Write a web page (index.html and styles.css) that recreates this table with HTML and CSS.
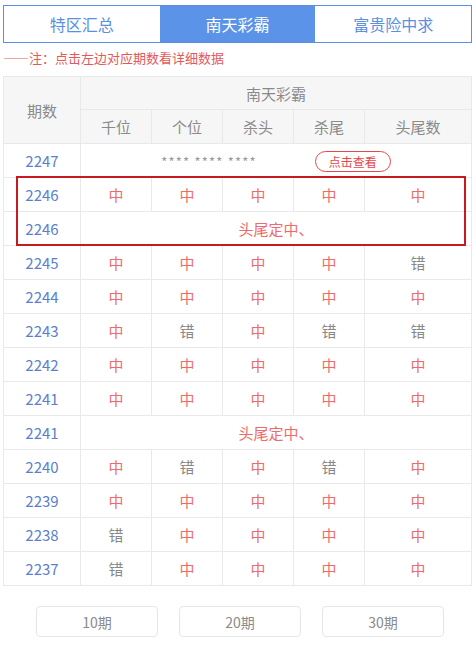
FILE: index.html
```
<!DOCTYPE html>
<html lang="zh-CN">
<head>
<meta charset="utf-8">
<link rel="stylesheet" href="styles.css">
</head>
<body>
<div class="page">
  <div class="tabs">
    <div class="tab">特区汇总</div>
    <div class="tab active">南天彩霸</div>
    <div class="tab">富贵险中求</div>
  </div>
  <div class="note">——注：点击左边对应期数看详细数据</div>
  <div class="table-wrap">
    <table class="grid">
      <colgroup>
        <col class="c-qi"><col class="c-n"><col class="c-n"><col class="c-n"><col class="c-n"><col class="c-last">
      </colgroup>
      <thead>
        <tr><th rowspan="2">期数</th><th colspan="5">南天彩霸</th></tr>
        <tr><th>千位</th><th>个位</th><th>杀头</th><th>杀尾</th><th>头尾数</th></tr>
      </thead>
      <tbody>
        <tr><td class="qi">2247</td><td colspan="5"><span class="stars">**** **** ****</span><span class="view">点击查看</span></td></tr>
        <tr><td class="qi">2246</td><td class="hit">中</td><td class="hit">中</td><td class="hit">中</td><td class="hit">中</td><td class="hit">中</td></tr>
        <tr><td class="qi">2246</td><td colspan="5" class="hit">头尾定中、</td></tr>
        <tr><td class="qi">2245</td><td class="hit">中</td><td class="hit">中</td><td class="hit">中</td><td class="hit">中</td><td class="miss">错</td></tr>
        <tr><td class="qi">2244</td><td class="hit">中</td><td class="hit">中</td><td class="hit">中</td><td class="hit">中</td><td class="hit">中</td></tr>
        <tr><td class="qi">2243</td><td class="hit">中</td><td class="miss">错</td><td class="hit">中</td><td class="miss">错</td><td class="miss">错</td></tr>
        <tr><td class="qi">2242</td><td class="hit">中</td><td class="hit">中</td><td class="hit">中</td><td class="hit">中</td><td class="hit">中</td></tr>
        <tr><td class="qi">2241</td><td class="hit">中</td><td class="hit">中</td><td class="hit">中</td><td class="hit">中</td><td class="hit">中</td></tr>
        <tr><td class="qi">2241</td><td colspan="5" class="hit">头尾定中、</td></tr>
        <tr><td class="qi">2240</td><td class="hit">中</td><td class="miss">错</td><td class="hit">中</td><td class="miss">错</td><td class="hit">中</td></tr>
        <tr><td class="qi">2239</td><td class="hit">中</td><td class="hit">中</td><td class="hit">中</td><td class="hit">中</td><td class="hit">中</td></tr>
        <tr><td class="qi">2238</td><td class="miss">错</td><td class="hit">中</td><td class="hit">中</td><td class="hit">中</td><td class="hit">中</td></tr>
        <tr><td class="qi">2237</td><td class="miss">错</td><td class="hit">中</td><td class="hit">中</td><td class="hit">中</td><td class="hit">中</td></tr>
      </tbody>
    </table>
    <div class="highlight"></div>
  </div>
  <div class="periods">
    <div class="pbtn">10期</div>
    <div class="pbtn">20期</div>
    <div class="pbtn">30期</div>
  </div>
</div>
</body>
</html>
```
FILE: styles.css
```
html, body {
  margin: 0;
  padding: 0;
  background: #fff;
}
body {
  font-family: "Noto Sans CJK SC", "Noto Sans", sans-serif;
}
.page {
  padding: 5px 4px 0 3px;
}
.tabs {
  display: flex;
  height: 38px;
  border: 1px solid #5b8fe0;
  box-sizing: border-box;
}
.tab {
  flex: 1;
  display: flex;
  align-items: center;
  justify-content: center;
  font-size: 16px;
  color: #5b8fe0;
}
.tab.active {
  background: #5b93e8;
  color: #fff;
}
.note {
  margin-top: 6px;
  height: 18px;
  line-height: 18px;
  font-size: 13px;
  color: #e4585a;
}
.table-wrap {
  position: relative;
  margin-top: 9px;
}
.grid {
  width: 100%;
  border-collapse: collapse;
  table-layout: fixed;
  font-size: 15px;
}
.c-qi { width: 77px; }
.c-n { width: 71px; }
.grid th, .grid td {
  border: 1px solid #e9e9e9;
  height: 33px;
  padding: 0;
  text-align: center;
  font-weight: normal;
}
.grid thead tr:first-child th {
  height: 32px;
}
.grid th {
  background: #f6f6f6;
  color: #8a8a8a;
}
.qi { color: #5b7fcc; }
.hit { color: #f06a6a; }
.miss { color: #888; }
.stars {
  font-size: 13px;
  color: #9a9a9a;
  letter-spacing: 1.2px;
  vertical-align: middle;
}
.view {
  display: inline-block;
  margin-left: 58px;
  padding: 0 13px;
  height: 19px;
  line-height: 19px;
  font-size: 12px;
  color: #e5484c;
  border: 1px solid #e5484c;
  border-radius: 11px;
  vertical-align: middle;
}
.highlight {
  position: absolute;
  left: 13px;
  top: 100px;
  width: 450px;
  height: 70px;
  box-sizing: border-box;
  border: 2px solid #c61a20;
  pointer-events: none;
}
.periods {
  display: flex;
  gap: 21px;
  padding-left: 33px;
  margin-top: 20px;
}
.pbtn {
  width: 122px;
  height: 31px;
  box-sizing: border-box;
  border: 1px solid #e6e6e6;
  border-radius: 4px;
  display: flex;
  align-items: center;
  justify-content: center;
  font-size: 14px;
  color: #8a8a8a;
}
```
